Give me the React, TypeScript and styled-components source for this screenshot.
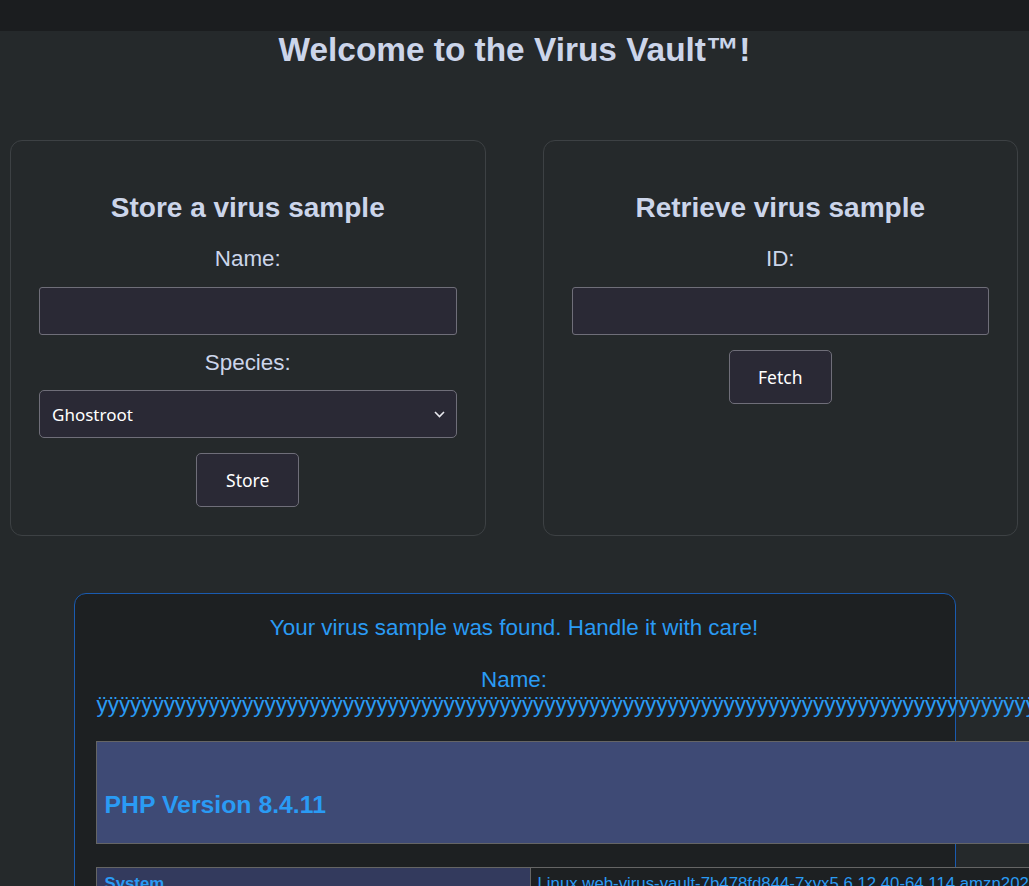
import React from "react";
import styled, { createGlobalStyle } from "styled-components";

const GlobalStyle = createGlobalStyle`
  html, body {
    margin: 0;
    padding: 0;
    background: #25292b;
    overflow: hidden;
  }
  body {
    font-family: "Liberation Sans", Arial, sans-serif;
    color: #ccd5ea;
  }
  * { box-sizing: border-box; }
`;

const TopBar = styled.header`
  height: 31px;
  background: #1b1d1f;
`;

const Title = styled.h1`
  margin: 0;
  text-align: center;
  font-size: 33.4px;
  line-height: 37px;
  font-weight: bold;
  color: #ccd5ea;
`;

const Cards = styled.section`
  display: grid;
  grid-template-columns: 1fr 1fr;
  gap: 57px;
  padding: 0 11px 0 10px;
  margin-top: 72px;
`;

const Card = styled.div`
  border: 1px solid #3d4144;
  border-radius: 12px;
  padding: 51px 28px 28px;
  display: flex;
  flex-direction: column;
  align-items: stretch;
`;

const CardTitle = styled.h2`
  margin: 0 0 23px;
  font-size: 28px;
  line-height: 31px;
  font-weight: bold;
  text-align: center;
  color: #ccd5ea;
`;

const Label = styled.label<{ $gap?: number }>`
  display: block;
  text-align: center;
  font-size: 22.4px;
  line-height: 25px;
  color: #ccd5ea;
  margin-bottom: ${(p) => p.$gap ?? 16}px;
`;

const TextInput = styled.input`
  display: block;
  width: 100%;
  height: 48px;
  background: #2a2935;
  border: 1px solid #6f6e79;
  border-radius: 3px;
  margin-bottom: 15px;
  color: #fff;
`;

const SelectBox = styled.div`
  position: relative;
  height: 48px;
  background: #2a2935;
  border: 1px solid #6f6e79;
  border-radius: 5px;
  display: flex;
  align-items: center;
  padding: 0 11px 0 12px;
  font-family: "Noto Sans", "Open Sans", sans-serif;
  font-size: 17px;
  color: #fff;
  margin-bottom: 15px;
`;

const SelectText = styled.span`
  flex: 1;
`;

const Button = styled.button`
  align-self: center;
  width: 103px;
  height: 54px;
  background: #2a2935;
  border: 1px solid #6f6e79;
  border-radius: 5px;
  color: #fff;
  font-family: "Noto Sans", "Open Sans", sans-serif;
  font-size: 17.5px;
  padding: 0;
`;

const Result = styled.div`
  width: 882px;
  margin: 57px auto 0;
  background: #1d2022;
  border: 1px solid #1a5bb0;
  border-radius: 12px;
  padding: 21px 22px 0 21px;
  color: #2a9bf4;
  font-size: 22.4px;
  line-height: 25.8px;
  text-align: center;
  height: 400px;
`;

const Message = styled.div`
  white-space: normal;
`;

const Long = styled.span`
  display: block;
  text-align: left;
  white-space: nowrap;
  margin-left: 1px;
`;

const PhpTable = styled.table`
  border-collapse: collapse;
  table-layout: fixed;
  width: 980px;
  margin: 23px 0 0;
  text-align: left;
`;

const HeaderCell = styled.td`
  background: #3e4a75;
  border: 1px solid #656565;
  padding: 0 8px;
  height: 102px;
  vertical-align: bottom;
`;

const PhpTitle = styled.h1`
  margin: 0 0 24px;
  font-size: 24.8px;
  line-height: 29px;
  font-weight: bold;
  color: #2a9bf4;
`;

const KeyCell = styled.td`
  background: #333a5d;
  border: 1px solid #656565;
  padding: 6px 8px 4px;
  width: 434px;
  font-weight: bold;
  font-size: 16.8px;
  line-height: 19px;
  color: #2a9bf4;
  vertical-align: baseline;
`;

const ValueCell = styled.td`
  background: #1d2022;
  border: 1px solid #656565;
  padding: 6px 7px 4px;
  font-size: 16.8px;
  line-height: 19px;
  color: #2a9bf4;
  white-space: nowrap;
  overflow: hidden;
  vertical-align: baseline;
`;

const Chevron = () => (
  <svg width="11" height="7" viewBox="0 0 11 7" fill="none">
    <path d="M1 1l4.5 4.5L10 1" stroke="#e8e8ee" strokeWidth="1.6" />
  </svg>
);

export default function App() {
  const y = "ÿ".repeat(130);
  return (
    <>
      <GlobalStyle />
      <TopBar />
      <Title>Welcome to the Virus Vault™!</Title>
      <Cards>
        <Card>
          <CardTitle>Store a virus sample</CardTitle>
          <Label>Name:</Label>
          <TextInput type="text" />
          <Label $gap={15}>Species:</Label>
          <SelectBox>
            <SelectText>Ghostroot</SelectText>
            <Chevron />
          </SelectBox>
          <Button>Store</Button>
        </Card>
        <Card>
          <CardTitle>Retrieve virus sample</CardTitle>
          <Label>ID:</Label>
          <TextInput type="text" />
          <Button>Fetch</Button>
        </Card>
      </Cards>
      <Result>
        <Message>
          Your virus sample was found. Handle it with care!
          <br />
          <br />
          Name:
          <Long>{y}</Long>
        </Message>
        <PhpTable>
          <tbody>
            <tr>
              <HeaderCell>
                <PhpTitle>PHP Version 8.4.11</PhpTitle>
              </HeaderCell>
            </tr>
          </tbody>
        </PhpTable>
        <PhpTable>
          <tbody>
            <tr>
              <KeyCell>System</KeyCell>
              <ValueCell>
                Linux web-virus-vault-7b478fd844-7xvx5 6.12.40-64.114.amzn2023.x86_64 #1 SMP
              </ValueCell>
            </tr>
          </tbody>
        </PhpTable>
      </Result>
    </>
  );
}
